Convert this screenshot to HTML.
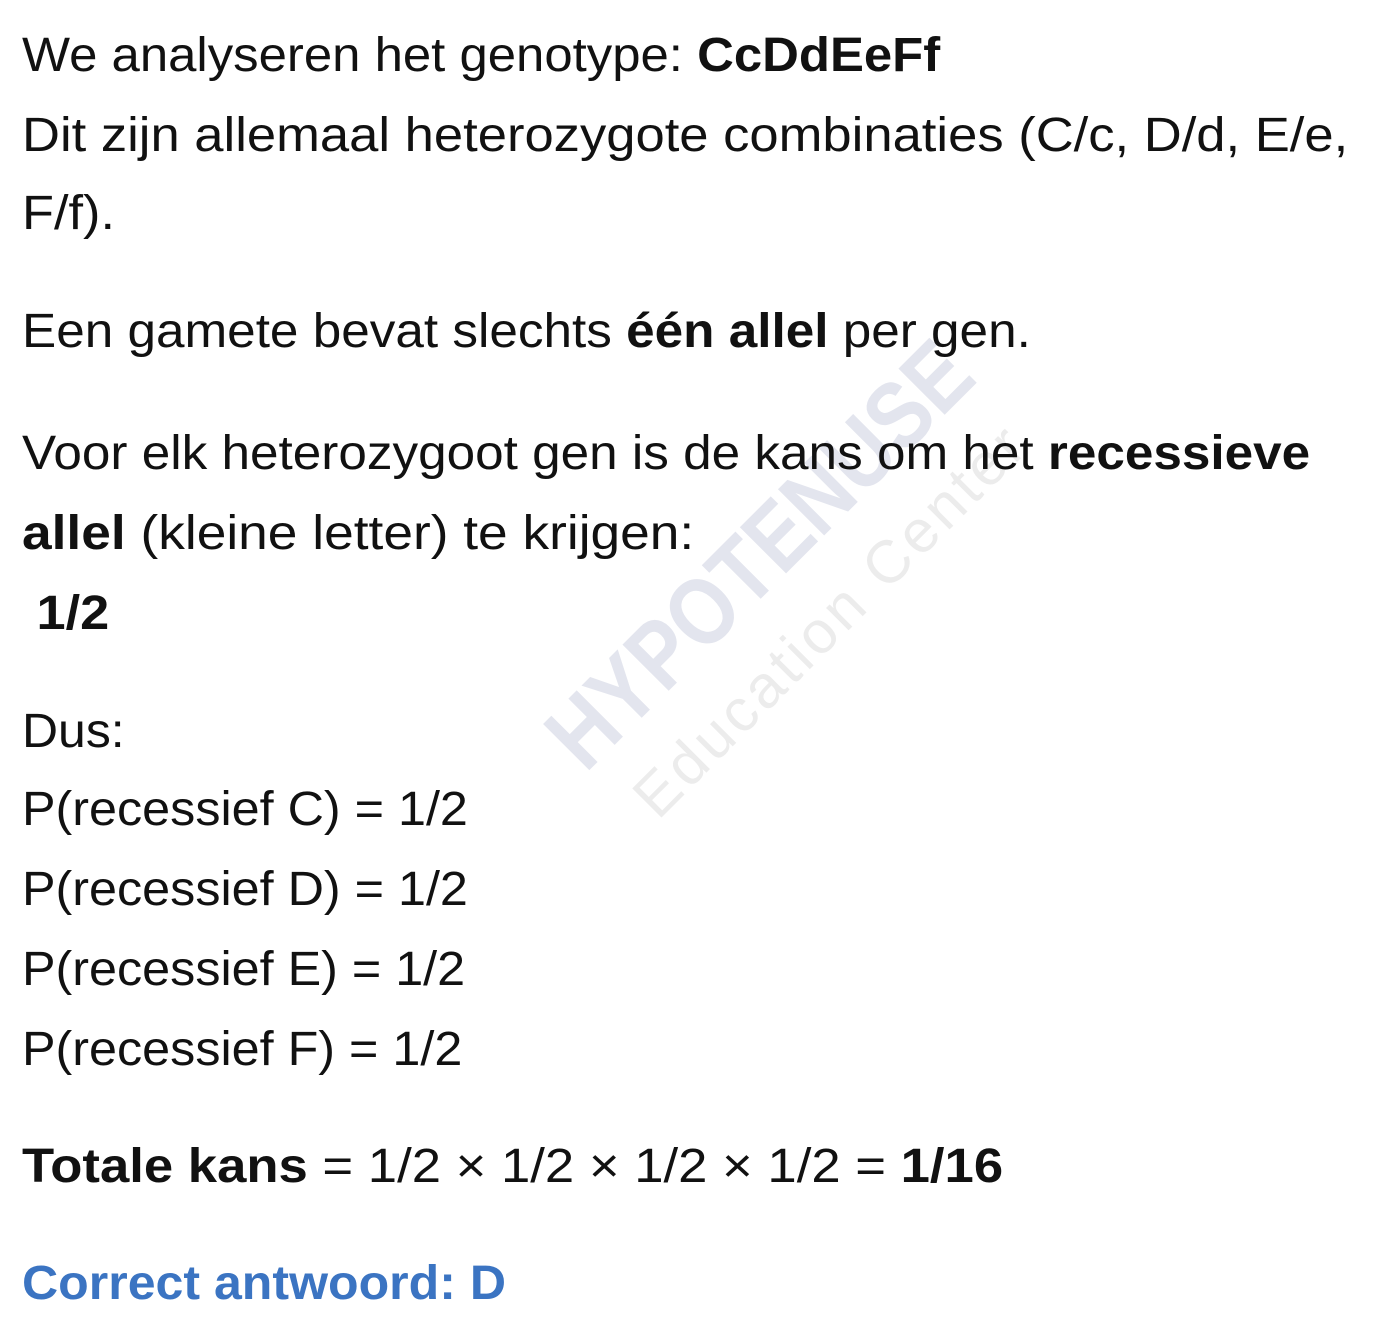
<!DOCTYPE html>
<html><head><meta charset="utf-8"><style>
html,body{margin:0;padding:0;background:#fff;width:1386px;height:1322px;overflow:hidden;position:relative}
.l{position:absolute;left:22px;white-space:nowrap;font-family:"Liberation Sans",sans-serif;font-size:48px;line-height:80px;color:#111;transform:scaleX(1.09);transform-origin:left top}
b{font-weight:bold}
.wm{position:absolute;left:760px;top:555px;font-family:"Liberation Sans",sans-serif;font-weight:bold;font-size:95px;color:#e3e5ee;transform:translate(-50%,-50%) rotate(-45deg) scaleX(0.85);white-space:nowrap}
.wm2{position:absolute;left:830px;top:620px;font-family:"Liberation Sans",sans-serif;font-size:60px;color:#ececec;transform:translate(-50%,-50%) rotate(-45deg);white-space:nowrap;letter-spacing:4px}
</style></head><body>
<div class="wm">HYPOTENUSE</div>
<div class="wm2">Education Center</div>
<div class="l" style="top:16px;transform:scaleX(1.06)">We analyseren het genotype: <b>CcDdEeFf</b></div>
<div class="l" style="top:96px;transform:scaleX(1.095)">Dit zijn allemaal heterozygote combinaties (C/c, D/d, E/e,</div>
<div class="l" style="top:174px">F/f).</div>
<div class="l" style="top:292px;transform:scaleX(1.068)">Een gamete bevat slechts <b>één allel</b> per gen.</div>
<div class="l" style="top:414px;transform:scaleX(1.068)">Voor elk heterozygoot gen is de kans om het <b>recessieve</b></div>
<div class="l" style="top:494px;transform:scaleX(1.11)"><b>allel</b> (kleine letter) te krijgen:</div>
<div class="l" style="top:574px">&nbsp;<b>1/2</b></div>
<div class="l" style="top:692px;transform:scaleX(1.04)">Dus:</div>
<div class="l" style="top:770px;transform:scaleX(1.048)">P(recessief C) = 1/2</div>
<div class="l" style="top:850px;transform:scaleX(1.048)">P(recessief D) = 1/2</div>
<div class="l" style="top:930px;transform:scaleX(1.048)">P(recessief E) = 1/2</div>
<div class="l" style="top:1010px;transform:scaleX(1.048)">P(recessief F) = 1/2</div>
<div class="l" style="top:1127px;transform:scaleX(1.097)"><b>Totale kans</b> = 1/2 × 1/2 × 1/2 × 1/2 = <b>1/16</b></div>
<div class="l" style="top:1244px;color:#3b74c2;transform:scaleX(1.043)"><b>Correct antwoord: D</b></div>
</body></html>
